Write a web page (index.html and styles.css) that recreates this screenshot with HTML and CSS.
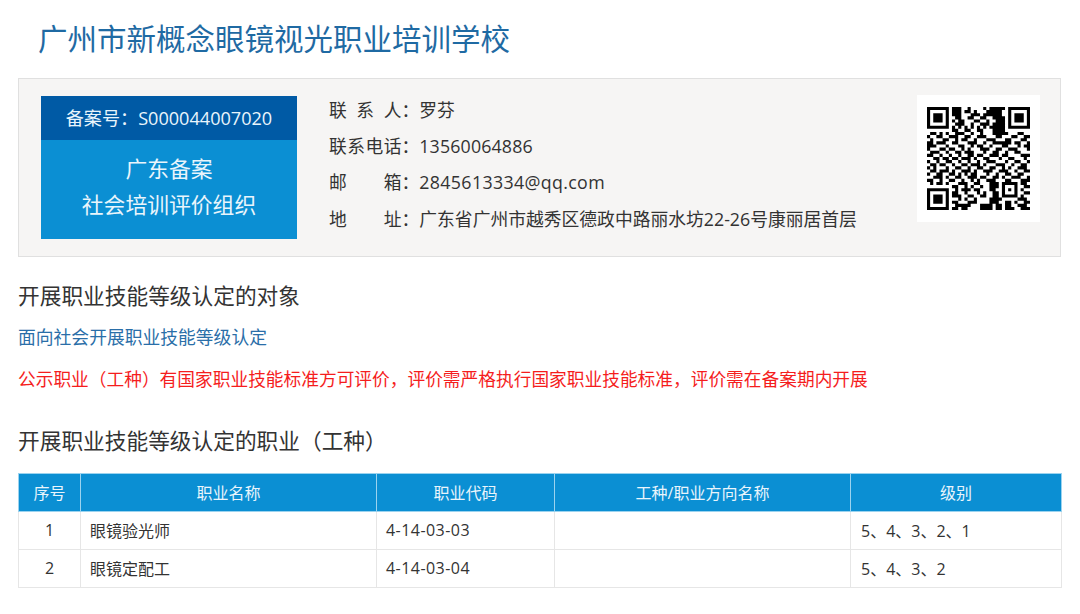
FILE: index.html
```html
<!DOCTYPE html>
<html lang="zh-CN">
<head>
<meta charset="utf-8">
<title>广州市新概念眼镜视光职业培训学校</title>
<link rel="stylesheet" href="styles.css">
</head>
<body>
<main class="page">
  <h1 class="title">广州市新概念眼镜视光职业培训学校</h1>
  <section class="info">
    <div class="badge">
      <div class="badge-no">备案号：S000044007020</div>
      <div class="badge-name">广东备案<br>社会培训评价组织</div>
    </div>
    <ul class="contact">
      <li><span class="label"><i>联</i><i>系</i><i>人</i></span><span>：</span><span>罗芬</span></li>
      <li><span class="label"><i>联</i><i>系</i><i>电</i><i>话</i></span><span>：</span><span class="phone">13560064886</span></li>
      <li><span class="label"><i>邮</i><i>箱</i></span><span>：</span><span class="email">2845613334@qq.com</span></li>
      <li><span class="label"><i>地</i><i>址</i></span><span>：</span><span>广东省广州市越秀区德政中路丽水坊22-26号康丽居首层</span></li>
    </ul>
    <div class="qr">
      <svg class="qr-code" viewBox="0 0 33 33" width="103" height="103" aria-label="二维码">
        <path class="qr-box" d="M.5 .5h6v6h-6zM26.5 .5h6v6h-6zM.5 26.5h6v6h-6z"/>
        <path class="qr-eye" d="M2 2h3v3h-3zM28 2h3v3h-3zM2 28h3v3h-3z"/>
        <path class="qr-bits" d="M8 .5h3M13 .5h1M18 .5h1M20 .5h5
        M8 1.5h3M12 1.5h2M15 1.5h1M19 1.5h5
        M8 2.5h3M14 2.5h3M18 2.5h6
        M9 3.5h2M13 3.5h2M17 3.5h2M21 3.5h4
        M8 4.5h1M10 4.5h2M15 4.5h2M19 4.5h1M22 4.5h3
        M9 5.5h3M14 5.5h1M17 5.5h3M21 5.5h4
        M8 6.5h1M10 6.5h1M12 6.5h1M14 6.5h1M16 6.5h1M18 6.5h1M20 6.5h5
        M8 7.5h2M12 7.5h2M16 7.5h2M21 7.5h4
        M1 8.5h2M4 8.5h1M6 8.5h1M9 8.5h3M14 8.5h1M17 8.5h1M21 8.5h5M29 8.5h2
        M0 9.5h1M3 9.5h2M7 9.5h3M12 9.5h2M16 9.5h3M22 9.5h2M27 9.5h2M31 9.5h2
        M1 10.5h1M5 10.5h2M9 10.5h1M11 10.5h2M15 10.5h1M19 10.5h3M25 10.5h2M30 10.5h2
        M0 11.5h2M3 11.5h3M8 11.5h2M13 11.5h3M18 11.5h1M21 11.5h6M28 11.5h2M32 11.5h1
        M0 12.5h3M6 12.5h1M10 12.5h2M14 12.5h1M16 12.5h2M20 12.5h1M24 12.5h2M29 12.5h1M31 12.5h2
        M0 13.5h1M4 13.5h2M7 13.5h2M11 13.5h1M13 13.5h1M17 13.5h3M22 13.5h2M26 13.5h3M32 13.5h1
        M1 14.5h3M6 14.5h1M9 14.5h2M12 14.5h3M18 14.5h1M21 14.5h2M25 14.5h1M28 14.5h2
        M0 15.5h2M4 15.5h1M7 15.5h1M10 15.5h1M13 15.5h2M16 15.5h2M20 15.5h3M24 15.5h2M30 15.5h3
        M2 16.5h2M5 16.5h2M8 16.5h2M11 16.5h3M15 16.5h1M18 16.5h2M23 16.5h1M26 16.5h2M31 16.5h1
        M0 17.5h1M3 17.5h1M6 17.5h2M10 17.5h1M13 17.5h1M16 17.5h1M19 17.5h3M25 17.5h1M28 17.5h2M32 17.5h1
        M1 18.5h2M4 18.5h2M8 18.5h1M11 18.5h2M14 18.5h3M18 18.5h1M22 18.5h3M27 18.5h1M30 18.5h2
        M0 19.5h1M2 19.5h1M6 19.5h1M9 19.5h2M13 19.5h1M16 19.5h2M20 19.5h2M24 19.5h1M26 19.5h1M29 19.5h3
        M1 20.5h2M4 20.5h3M8 20.5h1M11 20.5h3M15 20.5h1M18 20.5h3M23 20.5h3M28 20.5h1M31 20.5h2
        M0 21.5h1M3 21.5h2M7 21.5h2M10 21.5h1M12 21.5h1M14 21.5h2M19 21.5h1M22 21.5h1M25 21.5h2M29 21.5h2
        M2 22.5h3M6 22.5h1M9 22.5h2M13 22.5h3M17 22.5h2M21 22.5h2M24 22.5h1M27 22.5h3M32 22.5h1
        M0 23.5h2M4 23.5h1M7 23.5h2M11 23.5h1M14 23.5h1M16 23.5h1M19 23.5h3M25 23.5h2M30 23.5h3
        M1 24.5h1M3 24.5h2M6 24.5h1M10 24.5h3M15 24.5h2M20 24.5h3M24 24.5h5M30 24.5h2
        M8 25.5h2M12 25.5h1M14 25.5h1M17 25.5h1M20 25.5h3M24 25.5h1M28 25.5h1M31 25.5h2
        M9 26.5h1M11 26.5h3M15 26.5h2M20 26.5h2M24 26.5h1M26 26.5h1M28 26.5h1M30 26.5h1
        M8 27.5h2M12 27.5h1M16 27.5h1M18 27.5h1M21 27.5h2M24 27.5h1M28 27.5h1M31 27.5h2
        M8 28.5h3M13 28.5h2M17 28.5h2M21 28.5h2M24 28.5h5M30 28.5h1
        M10 29.5h1M12 29.5h1M15 29.5h1M20 29.5h4M29 29.5h3
        M8 30.5h2M13 30.5h3M20 30.5h3M25 30.5h2M28 30.5h1M31 30.5h2
        M9 31.5h5M17 31.5h4M22 31.5h2M25 31.5h2M29 31.5h3
        M8 32.5h2M11 32.5h2M17 32.5h4M22 32.5h2M25 32.5h3M30 32.5h3"/>
      </svg>
    </div>
  </section>

  <h2 class="heading">开展职业技能等级认定的对象</h2>
  <p class="scope">面向社会开展职业技能等级认定</p>
  <p class="notice">公示职业（工种）有国家职业技能标准方可评价，评价需严格执行国家职业技能标准，评价需在备案期内开展</p>

  <h2 class="heading heading-table">开展职业技能等级认定的职业（工种）</h2>
  <table class="jobs">
    <colgroup>
      <col class="c1"><col class="c2"><col class="c3"><col class="c4"><col class="c5">
    </colgroup>
    <thead>
      <tr><th>序号</th><th>职业名称</th><th>职业代码</th><th>工种/职业方向名称</th><th>级别</th></tr>
    </thead>
    <tbody>
      <tr><td class="num">1</td><td>眼镜验光师</td><td class="code">4-14-03-03</td><td></td><td class="level">5、4、3、2、1</td></tr>
      <tr><td class="num">2</td><td>眼镜定配工</td><td class="code">4-14-03-04</td><td></td><td class="level">5、4、3、2</td></tr>
    </tbody>
  </table>
</main>
</body>
</html>
```
FILE: styles.css
```css
* { box-sizing: border-box; }
html, body { margin: 0; padding: 0; background: #fff; }
body {
  font-family: "Open Sans", "Noto Sans CJK SC", sans-serif;
  color: #333;
  height: 614px;
  overflow: hidden;
}
.page { padding: 0 19px 0 18px; }
.title {
  margin: 0;
  padding: 17px 0 0 20px;
  height: 78px;
  font-size: 29.5px;
  line-height: 44px;
  font-weight: 400;
  color: #1f6aa3;
}
.info {
  height: 179px;
  border: 1px solid #e0e0e0;
  background: #f6f5f4;
  display: flex;
  align-items: flex-start;
  padding: 17px 20px 0 22px;
}
.badge { width: 256px; flex: none; color: #e9f5fc; text-align: center; }
.badge-no {
  height: 44px;
  line-height: 44px;
  background: #005aa5;
  font-size: 18.1px;
}
.badge-name {
  height: 99px;
  padding-top: 11px;
  background: #0b8fd3;
  font-size: 21.8px;
  line-height: 36px;
}
.contact {
  list-style: none;
  margin: 0 0 0 32px;
  padding: 0;
  flex: 1;
  font-size: 17.8px;
  color: #333;
}
.contact li { display: flex; height: 36.2px; line-height: 28px; align-items: flex-start; }
.label { width: 72.5px; display: flex; justify-content: space-between; }
.label i { font-style: normal; }
.phone { letter-spacing: .15px; }
.email { letter-spacing: .35px; }
.qr {
  width: 123px;
  height: 127px;
  flex: none;
  margin-top: -1px;
  background: #fff;
  display: flex;
  align-items: center;
  justify-content: center;
}
.qr-code { filter: blur(.35px); }
.qr-box { fill: none; stroke: #000; stroke-width: 1; }
.qr-eye { fill: #000; }
.qr-bits { fill: none; stroke: #000; stroke-width: 1; }
.heading {
  margin: 0;
  padding-top: 24px;
  height: 61px;
  font-size: 21.7px;
  line-height: 30px;
  font-weight: 400;
  color: #333;
}
.scope {
  margin: 0;
  height: 42px;
  font-size: 17.8px;
  line-height: 38px;
  color: #2a6ea8;
}
.notice {
  margin: 0;
  height: 42px;
  font-size: 17.72px;
  line-height: 38px;
  color: #f51d1d;
  white-space: nowrap;
}
.heading-table { padding-top: 24px; height: 71px; }
.jobs {
  width: 1043px;
  border-collapse: collapse;
  table-layout: fixed;
  font-size: 16px;
}
.c1 { width: 62px; }
.c2 { width: 296px; }
.c3 { width: 178px; }
.c4 { width: 296px; }
.c5 { width: 211px; }
.jobs th {
  height: 38px;
  padding: 0 0 2px;
  background: #0b8fd3;
  color: #e9f5fc;
  font-weight: 400;
  border: 1px solid #9bd3ef;
}
.jobs td {
  height: 38px;
  padding: 0 9px 2px;
  border: 1px solid #e6e6e6;
  color: #333;
}
.jobs td.num { text-align: center; padding: 0 0 2px; }
.jobs td.code { letter-spacing: .45px; }
.jobs td.level { padding-left: 10px; }
```
